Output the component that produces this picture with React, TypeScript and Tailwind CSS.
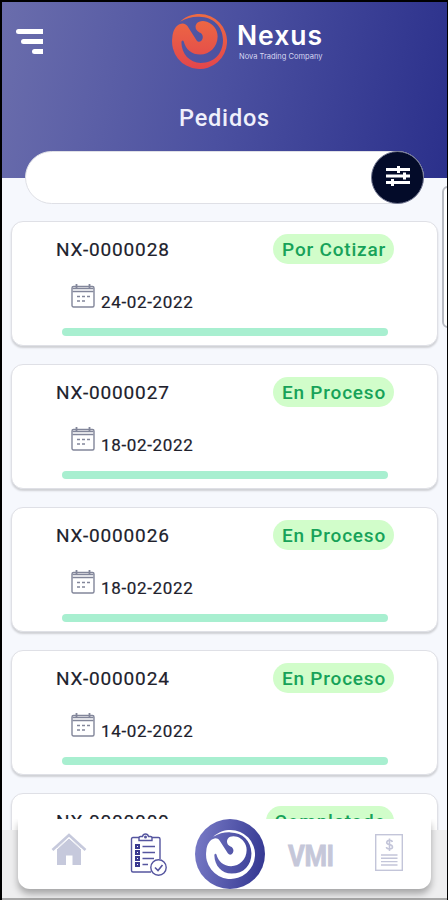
type Order = {
  id: string;
  date: string;
  status: string;
};

const orders: Order[] = [
  { id: 'NX-0000028', date: '24-02-2022', status: 'Por Cotizar' },
  { id: 'NX-0000027', date: '18-02-2022', status: 'En Proceso' },
  { id: 'NX-0000026', date: '18-02-2022', status: 'En Proceso' },
  { id: 'NX-0000024', date: '14-02-2022', status: 'En Proceso' },
  { id: 'NX-0000009', date: '10-02-2022', status: 'Completado' },
];

function Swirl({ className, fill }: { className: string; fill: string }) {
  return (
    <svg viewBox="36 42 164 164" className={className}>
      <defs>
        <linearGradient id="ember" x1="0" y1="0" x2="0" y2="1">
          <stop offset="0" stopColor="#ee6b42" />
          <stop offset="1" stopColor="#e2464c" />
        </linearGradient>
      </defs>
      <path
        fill={fill}
        d="M60 65C78 48 98 42 118 42A82 82 0 1 1 37 112C38 92 48 76 60 72C68 68 76 70 82 78L109 120C114 127 122 126 126 118C131 108 125 99 118 97C107 92 103 80 109 71C115 63 128 61 140 65C158 71 172 88 172 109C172 140 148 163 120 163C95 163 77 148 71 124C69 119 64 121 64 127C65 161 88 187 122 188C163 188 189 158 188 119C187 77 158 51 118 50C98 49 80 53 60 65z"
      />
    </svg>
  );
}

function CalendarIcon() {
  return (
    <svg viewBox="0 0 24 24" className="h-6 w-6" fill="none" stroke="#82869a" strokeWidth="1.4">
      <rect x="1" y="2.5" width="22" height="20.5" rx="1.5" />
      <path d="M1.5 4.500h21M1.5 7.5h21" />
      <path d="M5.5 0v5M18.5 0v5" strokeWidth="1.8" />
      <path d="M6 12.5h3M11 12.5h3M16 12.5h3M6 17h3M11 17h3" strokeWidth="1.5" />
    </svg>
  );
}

function HomeIcon() {
  return (
    <svg viewBox="0 0 36 34" className="h-[34px] w-9">
      <path d="M6 16L18 6L30 16V33H21.500V23.500H15V33H6z" fill="#c6c9dc" />
      <path d="M1.500 18L18 3L34.500 18" fill="none" stroke="#c6c9dc" strokeWidth="2.600" />
      <path d="M4 18.800L18 6L32 18.800" fill="none" stroke="#fff" strokeWidth="1" />
    </svg>
  );
}

function ClipboardIcon() {
  return (
    <svg viewBox="0 0 38 44" className="h-11 w-[38px]" fill="none" stroke="#55559f" strokeWidth="1.400">
      <path d="M9 4.500H3Q1.500 4.500 1.500 6V37.500Q1.500 39 3 39H21M22 4.500H28.500Q30 4.500 30 6V26" />
      <path d="M9 7.500V5Q9 3.500 10.500 3.500H12.500Q13 1 15.500 1T18.500 3.500H20.500Q22 3.500 22 5V7.500z" fill="#fff" />
      <circle cx="15.500" cy="4" r=".8" />
      <path d="M6 12h3v3h-3zM6 18h3v3h-3zM6 24h3v3h-3zM6 30h3v3h-3z" stroke="#3a3990" strokeWidth="2" />
      <path d="M12.500 13.500H25M12.500 19.500H25M12.500 25.500H24M12.500 31.500H18" strokeWidth="1.700" />
      <circle cx="28.500" cy="34.500" r="7.700" fill="#fff" />
      <path d="M25 34.500l3 3l4.500-5.500" strokeWidth="1.600" />
    </svg>
  );
}

function InvoiceIcon() {
  return (
    <svg viewBox="0 0 28 37" className="h-[37px] w-7" fill="none" stroke="#c3c5d9" strokeWidth="1.400">
      <rect x=".7" y=".7" width="26.600" height="35.600" />
      <path d="M6 21h16.500M6 24.300h16.500M6 27.600h16.500M6 31h16.500" strokeWidth="1.400" />
      <path d="M17.300 8Q17 6.300 14.500 6.300T11.700 8.500Q11.700 10 14.500 10.500T17.500 13Q17.500 15 14.500 15T11.500 13M14.500 4.500V17" strokeWidth="1.600" />
    </svg>
  );
}

function OrderCard({ order }: { order: Order }) {
  return (
    <div className="h-[125px] w-[427px] shrink-0 rounded-xl border border-[#dfe0e6] bg-white pl-[43px] pr-[42px] shadow-[0_2px_2px_rgba(0,0,0,0.16)]">
      <div className="flex items-start justify-between pt-3">
        <h2 className="ml-px pt-1 text-[19px] leading-6 tracking-[0.85px] text-[#20212c] [-webkit-text-stroke:0.2px_#20212c]">{order.id}</h2>
        <span className="mr-px h-[30px] rounded-full bg-[#d1fdca] pl-[9px] pr-2 text-[19px] font-medium leading-[31px] tracking-[0.8px] text-[#17a259]">
          {order.status}
        </span>
      </div>
      <div className="flex gap-1.5 pl-4 pt-5">
        <CalendarIcon />
        <p className="pt-2 text-[17px] leading-5 tracking-[0.65px] text-[#20212c] [-webkit-text-stroke:0.2px_#20212c]">{order.date}</p>
      </div>
      <div className="ml-[7px] mt-4 h-2 w-[326px] rounded-full bg-[#a8efd0]" />
    </div>
  );
}

export default function App() {
  return (
    <div className="relative h-[900px] w-[448px] overflow-hidden border-l-2 border-r border-t-2 border-black bg-[#f6f8fd] font-['Roboto',sans-serif]">
      {/* Header */}
      <header className="h-44 bg-[linear-gradient(100deg,#6a6dac_0%,#4b50a0_50%,#2b308b_100%)]">
        <div className="flex h-[86px] items-start">
          <button className="ml-3.5 mt-[27px] flex w-[27px] flex-col items-end gap-[5px]">
            <span className="h-[5px] w-[27px] rounded-l-sm bg-white" />
            <span className="h-[5px] w-[22px] rounded-l-sm bg-white" />
            <span className="h-[5px] w-[11px] rounded-l-sm bg-white" />
          </button>
          <Swirl className="ml-[129px] mt-3 h-[55px] w-[55px]" fill="url(#ember)" />
          <div className="ml-2.5 mt-4 font-['Inter',sans-serif] text-white">
            <p className="text-[26.500px] font-semibold leading-[34px] tracking-[1px]">Nexus</p>
            <p className="ml-0.5 text-[7.500px] leading-[9px] text-[#d5d6f1]">Nova Trading Company</p>
          </div>
        </div>
        <h1 className="pt-[15px] text-center text-[23.500px] font-medium leading-[30px] tracking-[0.8px] text-[#eff0fb]">Pedidos</h1>
      </header>

      {/* Search */}
      <div className="relative -mt-[27px] ml-[23px] flex h-[53px] w-[399px] justify-end rounded-full border border-[#dfe0e6] bg-white">
        <button className="-mr-px -mt-px flex h-[53px] w-[53px] items-center justify-center rounded-full border border-[#747993] bg-[#030b29]">
          <svg viewBox="0 0 24 20" className="mb-1 h-5 w-6" stroke="white" strokeWidth="3">
            <path d="M0 3.500h24M0 10h24M0 16.500h24" />
            <path d="M12.500 0v7M18.500 6.500v7M6.500 13v7" />
          </svg>
        </button>
      </div>

      {/* Orders */}
      <main className="ml-[9px] mt-[17px] flex flex-col gap-[18px]">
        {orders.map((order) => (
          <OrderCard key={order.id} order={order} />
        ))}
      </main>
      <div className="absolute left-[440px] top-[184px] h-[142px] w-3 rounded-md border-2 border-[#b8bbc3] bg-white" />

      {/* Bottom navigation */}
      <div className="absolute inset-x-0 bottom-0 h-[70px] border-b-2 border-[#a8a8a8] bg-[#eeeeef]" />
      <nav className="absolute bottom-[11px] left-4 flex h-[70px] w-[413px] items-start rounded-b-xl bg-white shadow-[0_5px_7px_rgba(0,0,0,0.3)] [clip-path:inset(0_-12px_-12px_-12px)]">
        <div className="ml-[33px] mt-[13px]"><HomeIcon /></div>
        <div className="ml-[43px] mt-[14px]"><ClipboardIcon /></div>
        <div className="ml-[27px] flex h-[70px] w-[70px] items-center justify-center rounded-full bg-[linear-gradient(100deg,#7b7dc8,#30348f)]">
          <Swirl className="h-[49px] w-[49px]" fill="white" />
        </div>
        <span className="ml-[23px] mt-5 w-[45px] origin-left scale-x-[0.86] font-['Roboto',sans-serif] text-[30px] font-bold leading-[34px] tracking-[-0.5px] text-[#c5c7d9] [-webkit-text-stroke:0.8px_#c5c7d9]">VMI</span>
        <div className="ml-[42px] mt-[15px]"><InvoiceIcon /></div>
      </nav>
    </div>
  );
}
